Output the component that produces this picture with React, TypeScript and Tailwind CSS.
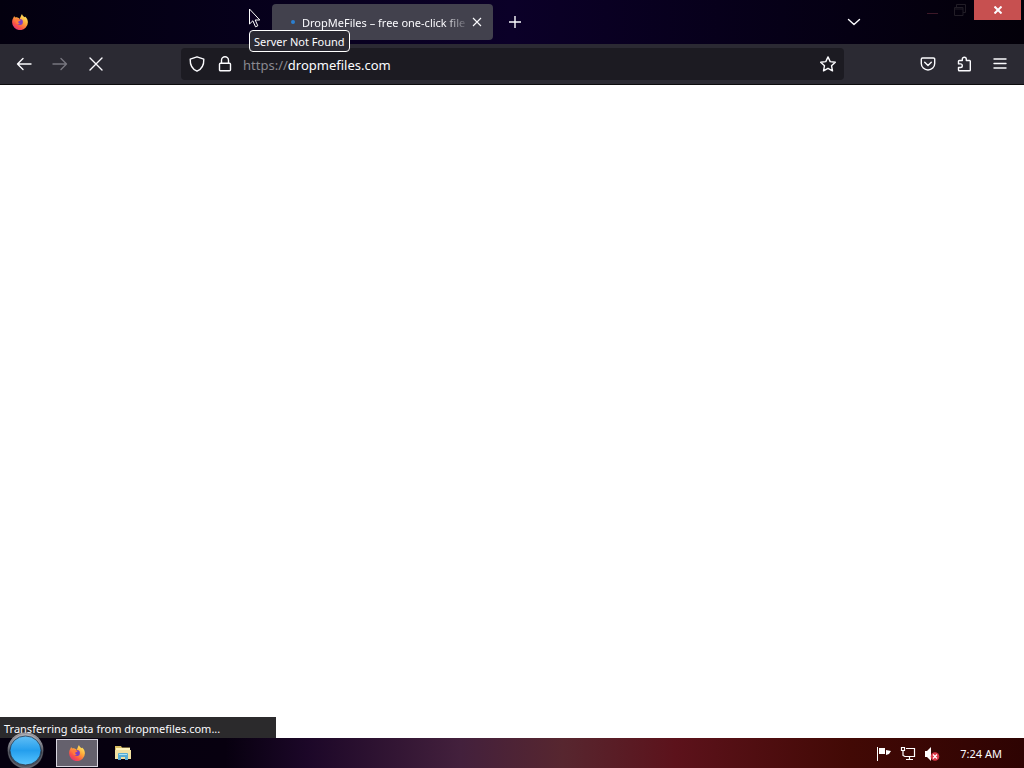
import React from 'react';

function Firefox({ size }: { size: number }) {
  return (
    <svg width={size} height={size} viewBox="0 0 16 16" aria-hidden="true">
      <defs>
        <linearGradient id="flame" x1="0.85" y1="0.05" x2="0.2" y2="0.95">
          <stop offset="0" stopColor="#fff06a" />
          <stop offset="0.4" stopColor="#ffa838" />
          <stop offset="0.75" stopColor="#fb5444" />
          <stop offset="1" stopColor="#e0307c" />
        </linearGradient>
      </defs>
      <path
        d="M10 0c.2 1.600 1.400 2.300 2.500 3.200.3-.3.400-.5.500-.8 2 1.400 2.900 3.600 2.900 5.800A7.900 7.900 0 0 1 .1 8.200C.1 6.400.6 5 1.300 4c.1-.9.500-1.600 1.100-2.100.1.700.4 1.200.8 1.500.8-.2 1.600-.1 2.300.2.900.3 1.500.8 2 1.500C8.300 3.900 8.900 1.700 10 0Z"
        fill="url(#flame)"
      />
      <circle cx="8" cy="8" r="2.900" fill="#7b3fc4" />
      <path d="M3.200 5.200c1.800-1 3.100-.6 4.200.3l1.300.5c-.3 1-1.500.9-2.300 1.600-.6.700 0 1.900 1.600 1.700-1.300 1.300-4 .6-4.300-1.400Z" fill="#ff7b3c" />
    </svg>
  );
}

const line = {
  fill: 'none',
  stroke: 'currentColor',
  strokeWidth: 1.4,
  strokeLinecap: 'round' as const,
  strokeLinejoin: 'round' as const,
};

function Icon({ d, size = 16 }: { d: string; size?: number }) {
  return (
    <svg width={size} height={size} viewBox="0 0 16 16" aria-hidden="true" {...line}>
      <path d={d} />
    </svg>
  );
}

function ToolButton({ label, d, disabled = false }: { label: string; d: string; disabled?: boolean }) {
  return (
    <button aria-label={label} disabled={disabled} className="flex size-9 items-center justify-center disabled:text-[#77767f]">
      <Icon d={d} />
    </button>
  );
}

function TitleBar() {
  return (
    <header className="relative flex h-11 items-start bg-linear-to-r from-[#03000f] via-[#0b0028] to-[#030009]">
      <div className="flex h-11 w-68 items-center pl-3">
        <Firefox size={16} />
      </div>
      <div className="mt-1 flex h-9 min-w-0 basis-[221px] items-center rounded bg-[#42414d] pr-2 pl-[19px]">
        <span className="size-1 shrink-0 rounded-full bg-[#2b7fd0]" />
        <span className="ml-[7px] min-w-0 flex-1 overflow-hidden mask-r-from-85% pt-0.5 text-[11px] leading-4 whitespace-nowrap">
          DropMeFiles – free one-click file
        </span>
        <button aria-label="Close tab" className="flex size-4 shrink-0 items-center justify-center">
          <svg width="10" height="10" viewBox="0 0 10 10" stroke="currentColor" strokeWidth="1.100" aria-hidden="true">
            <path d="m1 1 8 8M9 1 1 9" />
          </svg>
        </button>
      </div>
      <button aria-label="New tab" className="mt-1 ml-1 flex size-9 items-center justify-center">
        <svg width="12" height="12" viewBox="0 0 12 12" stroke="currentColor" strokeWidth="1.400" aria-hidden="true">
          <path d="M6 0v12M0 6h12" />
        </svg>
      </button>
      <button aria-label="List all tabs" className="mt-1 mr-[46px] ml-auto flex size-9 items-center justify-center">
        <Icon d="m2.500 5.500 5.500 5 5.500-5" />
      </button>
      <button aria-label="Minimize" className="flex h-5 w-7 items-center justify-center text-[#3c1828]">
        <svg width="11" height="12" viewBox="0 0 11 12" stroke="currentColor" strokeWidth="1" aria-hidden="true">
          <path d="M0 9.500h11" />
        </svg>
      </button>
      <button aria-label="Restore" className="flex h-5 w-7 items-center justify-center text-[#211d26]">
        <svg width="12" height="12" viewBox="0 0 12 12" fill="none" stroke="currentColor" aria-hidden="true">
          <path d="M2.500 3V.5h9v8H9M.5 3.500h8.500v8H.5zM.5 5h8.500" />
        </svg>
      </button>
      <button aria-label="Close" className="mr-[3px] flex h-5 w-[47px] items-center justify-center bg-[#c75050]">
        <svg width="8" height="8" viewBox="0 0 8 8" stroke="currentColor" strokeWidth="2" aria-hidden="true">
          <path d="m.5 .5 7 7M7.500.5l-7 7" />
        </svg>
      </button>
      <div role="tooltip" className="absolute top-[30px] left-[249px] z-10 rounded border border-white bg-[#2b2a33] px-1 pt-[3px] pb-px text-[11px] leading-4 whitespace-nowrap">
        Server Not Found
      </div>
      <svg className="absolute top-2 left-[249px] z-10" width="12" height="20" viewBox="0 0 12 20" fill="#0a0020" stroke="#fff" aria-hidden="true">
        <path d="M.5 1v15l3.400-3.200 2.600 6 2.300-1-2.600-5.800h4.600Z" />
      </svg>
    </header>
  );
}

function NavBar() {
  return (
    <nav className="flex h-[41px] items-center border-b border-[#0c0c0d] bg-[#2b2a33] px-1.5">
      <ToolButton label="Back" d="M15 8H1.500M7 2.500 1.500 8 7 13.500" />
      <ToolButton label="Forward" d="M1 8h13.500M9 2.500 14.500 8 9 13.500" disabled />
      <ToolButton label="Stop" d="m2 2 12 12M14 2 2 14" />
      <div className="ml-[67px] flex h-8 min-w-0 flex-1 items-center rounded bg-[#1c1b22] px-2">
        <button aria-label="Tracking protection">
          <Icon d="M8 .8 14.800 3.200C15 8.500 13 13 8 15.200 3 13 1 8.500 1.200 3.200Z" />
        </button>
        <button aria-label="Connection security" className="ml-3">
          <Icon d="M4.500 7V4.200a3.500 3.500 0 0 1 7 0V7M3.500 7.200h9a1 1 0 0 1 1 1v5.500a1 1 0 0 1-1 1h-9a1 1 0 0 1-1-1V8.200a1 1 0 0 1 1-1Z" />
        </button>
        <div className="relative ml-2.5 min-w-0 flex-1 pt-0.5 text-[13px] leading-6">
          <div aria-hidden="true" className="pointer-events-none absolute inset-x-0 whitespace-nowrap">
            <span className="text-[#8a8990]">https://</span>dropmefiles.com
          </div>
          <input aria-label="Address" defaultValue="https://dropmefiles.com" className="block w-full bg-transparent text-transparent caret-white outline-none" />
        </div>
        <button aria-label="Bookmark this page">
          <Icon d="m8 .9 2.200 4.700 5.100.6-3.800 3.500 1 5.100L8 12.300l-4.500 2.500 1-5.100L.7 6.200l5.100-.6Z" />
        </button>
      </div>
      <div className="ml-[66px] flex">
        <ToolButton label="Save to Pocket" d="M2.500 2h11a1.200 1.200 0 0 1 1.200 1.200V7.500a6.700 6.500 0 0 1-13.400 0V3.200A1.200 1.200 0 0 1 2.500 2ZM4.700 6.200 8 9.400l3.300-3.200" />
        <ToolButton label="Extensions" d="M6.300 4.500V3.200a2 2 0 0 1 4 0v1.300h3.200a.8.8 0 0 1 .8.800v8.700a.8.8 0 0 1-.8.800H3.300a.8.8 0 0 1-.8-.8v-2.500h2a1.800 1.800 0 0 0 0-3.600h-2V5.300a.8.8 0 0 1 .8-.8Z" />
        <ToolButton label="Open application menu" d="M2 3h12M2 7.500h12M2 12h12" />
      </div>
    </nav>
  );
}

function Taskbar() {
  return (
    <footer className="relative flex h-[30px] items-center bg-[linear-gradient(to_right,#05000f_0%,#07000f_22%,#1c0728_30%,#43203c_45%,#57262f_55%,#5c121b_66%,#420905_83%,#2e0302_100%)]">
      <button aria-label="Start" className="absolute -top-[6px] left-[7px]">
        <svg width="37" height="37" viewBox="0 0 37 37" aria-hidden="true">
          <defs>
            <linearGradient id="orb" x1="0" y1="0" x2="0" y2="1">
              <stop offset="0" stopColor="#62bff5" />
              <stop offset="0.5" stopColor="#249eed" />
              <stop offset="1" stopColor="#58c5ff" />
            </linearGradient>
            <linearGradient id="rim" x1="0" y1="0" x2="0" y2="1">
              <stop offset="0" stopColor="#b4b5bb" />
              <stop offset="0.35" stopColor="#85868e" />
              <stop offset="0.55" stopColor="#30323c" />
              <stop offset="1" stopColor="#565964" />
            </linearGradient>
          </defs>
          <circle cx="18.500" cy="18.500" r="18" fill="url(#rim)" />
          <circle cx="18.500" cy="18.500" r="17" fill="none" stroke="#777983" strokeWidth="0.600" />
          <ellipse cx="18.500" cy="18.500" rx="15.500" ry="14.500" fill="url(#orb)" stroke="#27384b" strokeWidth="0.800" />
        </svg>
      </button>
      <button aria-label="Firefox" className="ml-14 flex h-7 w-[42px] items-center justify-center border border-[#d8d5df] bg-[#65616d]">
        <Firefox size={16} />
      </button>
      <button aria-label="File Explorer" className="ml-4">
        <svg width="18" height="16" viewBox="0 0 18 16" aria-hidden="true">
          <path d="M1 1h6l1 1.500h8V14H1z" fill="#d8bd62" />
          <path d="M2 3h14v3H2z" fill="#fff4bd" />
          <path d="M1 5h16v9H1z" fill="#f0e0a0" />
          <path d="M4 15V9q0-1 1-1h8q1 0 1 1v6h-3v-3H7v3z" fill="#55acd5" />
          <path d="M5 9h8v1H5z" fill="#a9e3f4" />
        </svg>
      </button>
      <div className="ml-auto flex items-center gap-2 pt-0.5">
        <svg width="16" height="16" viewBox="0 0 16 16" fill="#fff" role="img" aria-label="Action Center">
          <path d="M1 1h1v14H1zM3 2h6v6H3zM10 4l5 1-2 3-3 1z" />
        </svg>
        <svg width="16" height="16" viewBox="0 0 16 16" fill="none" stroke="#fff" role="img" aria-label="Network">
          <path d="M6 2.500h8.500v8H4.500M9.500 10.500v3M6 13.500h7M1.500 1.500h3v3h-3zM3 4.500V9.500l2 1" strokeWidth="1.200" />
        </svg>
        <svg width="16" height="16" viewBox="0 0 16 16" role="img" aria-label="Volume muted">
          <path d="M1 5h2l4-4v14l-4-4H1z" fill="#fff" />
          <circle cx="11" cy="10.500" r="4.300" fill="#d93645" />
          <path d="m9 8.500 4 4m0-4-4 4" stroke="#fff" strokeWidth="1.200" />
        </svg>
      </div>
      <time className="mr-[22px] ml-5 pt-0.5 text-[11px] leading-4">7:24 AM</time>
    </footer>
  );
}

export default function App() {
  return (
    <div className="flex min-h-screen flex-col bg-white font-['Noto_Sans',sans-serif] text-[#fbfbfe]">
      <TitleBar />
      <NavBar />
      <main className="flex flex-1 items-end">
        <div role="status" className="w-[276px] bg-[#2b2a2c] px-1 pt-1 pb-px text-[11px] leading-4">
          Transferring data from dropmefiles.com...
        </div>
      </main>
      <Taskbar />
    </div>
  );
}
